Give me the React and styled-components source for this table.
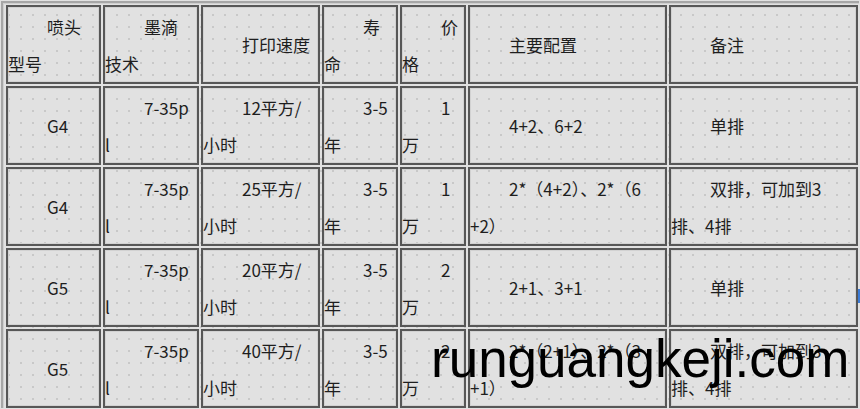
import React from "react";
import styled, { createGlobalStyle } from "styled-components";

const Global = createGlobalStyle`
  html, body {
    margin: 0;
    padding: 0;
    width: 860px;
    height: 409px;
    overflow: hidden;
    background-color: #e1e1e1;
    background-image: radial-gradient(circle, #c8c8c8 0.8px, transparent 1.2px);
    background-size: 12px 12px;
    background-position: 3px -3px;
  }
  #root { position: relative; width: 860px; height: 409px; }
`;

const Page = styled.div`
  position: relative;
  width: 860px;
  height: 409px;
  box-sizing: border-box;
  padding: 1px 0 0 1px;
  font-family: "Noto Sans CJK SC", "Noto Sans", sans-serif;
  color: #1e1e1e;
`;

const Table = styled.div`
  display: grid;
  grid-template-columns: 95px 96px 119px 76px 66px 199px 189px;
  grid-auto-rows: 79px;
  gap: 2px;
  padding: 2px 0 0 3px;
  border-top: 2px solid #a6a6a6;
  border-left: 2px solid #a6a6a6;
  box-shadow: inset 1px 1px 0 #cfcfcf;
  width: 858px;
  box-sizing: border-box;
`;

const Cell = styled.div`
  box-sizing: border-box;
  border: 2px solid #575757;
  box-shadow: inset 1px 1px 0 #d2d2d2, inset -1px -1px 0 #d2d2d2;
  display: flex;
  flex-direction: column;
  justify-content: center;
  overflow: hidden;
`;

const Text = styled.div`
  font-size: 17px;
  line-height: 37px;
  white-space: nowrap;
  text-indent: 39px;
`;

const Watermark = styled.div`
  position: absolute;
  left: 431px;
  top: 332px;
  font-family: "Liberation Sans", Arial, sans-serif;
  font-size: 53px;
  line-height: 53px;
  color: #000;
  white-space: nowrap;
`;

const EdgeMark = styled.div`
  position: absolute;
  right: 0;
  top: 289px;
  width: 2px;
  height: 14px;
  background: #3b7bd6;
`;

const rows = [
  [["喷头", "型号"], ["墨滴", "技术"], ["打印速度"], ["寿", "命"], ["价", "格"], ["主要配置"], ["备注"]],
  [["G4"], ["7-35p", "l"], ["12平方/", "小时"], ["3-5", "年"], ["1", "万"], ["4+2、6+2"], ["单排"]],
  [["G4"], ["7-35p", "l"], ["25平方/", "小时"], ["3-5", "年"], ["1", "万"], ["2*（4+2）、2*（6", "+2）"], ["双排，可加到3", "排、4排"]],
  [["G5"], ["7-35p", "l"], ["20平方/", "小时"], ["3-5", "年"], ["2", "万"], ["2+1、3+1"], ["单排"]],
  [["G5"], ["7-35p", "l"], ["40平方/", "小时"], ["3-5", "年"], ["2", "万"], ["2*（2+1）、2*（3", "+1）"], ["双排，可加到3", "排、4排"]],
];

export default function App() {
  return (
    <>
      <Global />
      <Page>
        <Table>
          {rows.map((row, r) =>
            row.map((lines, c) => (
              <Cell key={`${r}-${c}`}>
                <Text>
                  {lines.map((l, i) => (
                    <React.Fragment key={i}>
                      {i > 0 && <br />}
                      {l}
                    </React.Fragment>
                  ))}
                </Text>
              </Cell>
            ))
          )}
        </Table>
        <EdgeMark />
        <Watermark>runguangkeji.com</Watermark>
      </Page>
    </>
  );
}
